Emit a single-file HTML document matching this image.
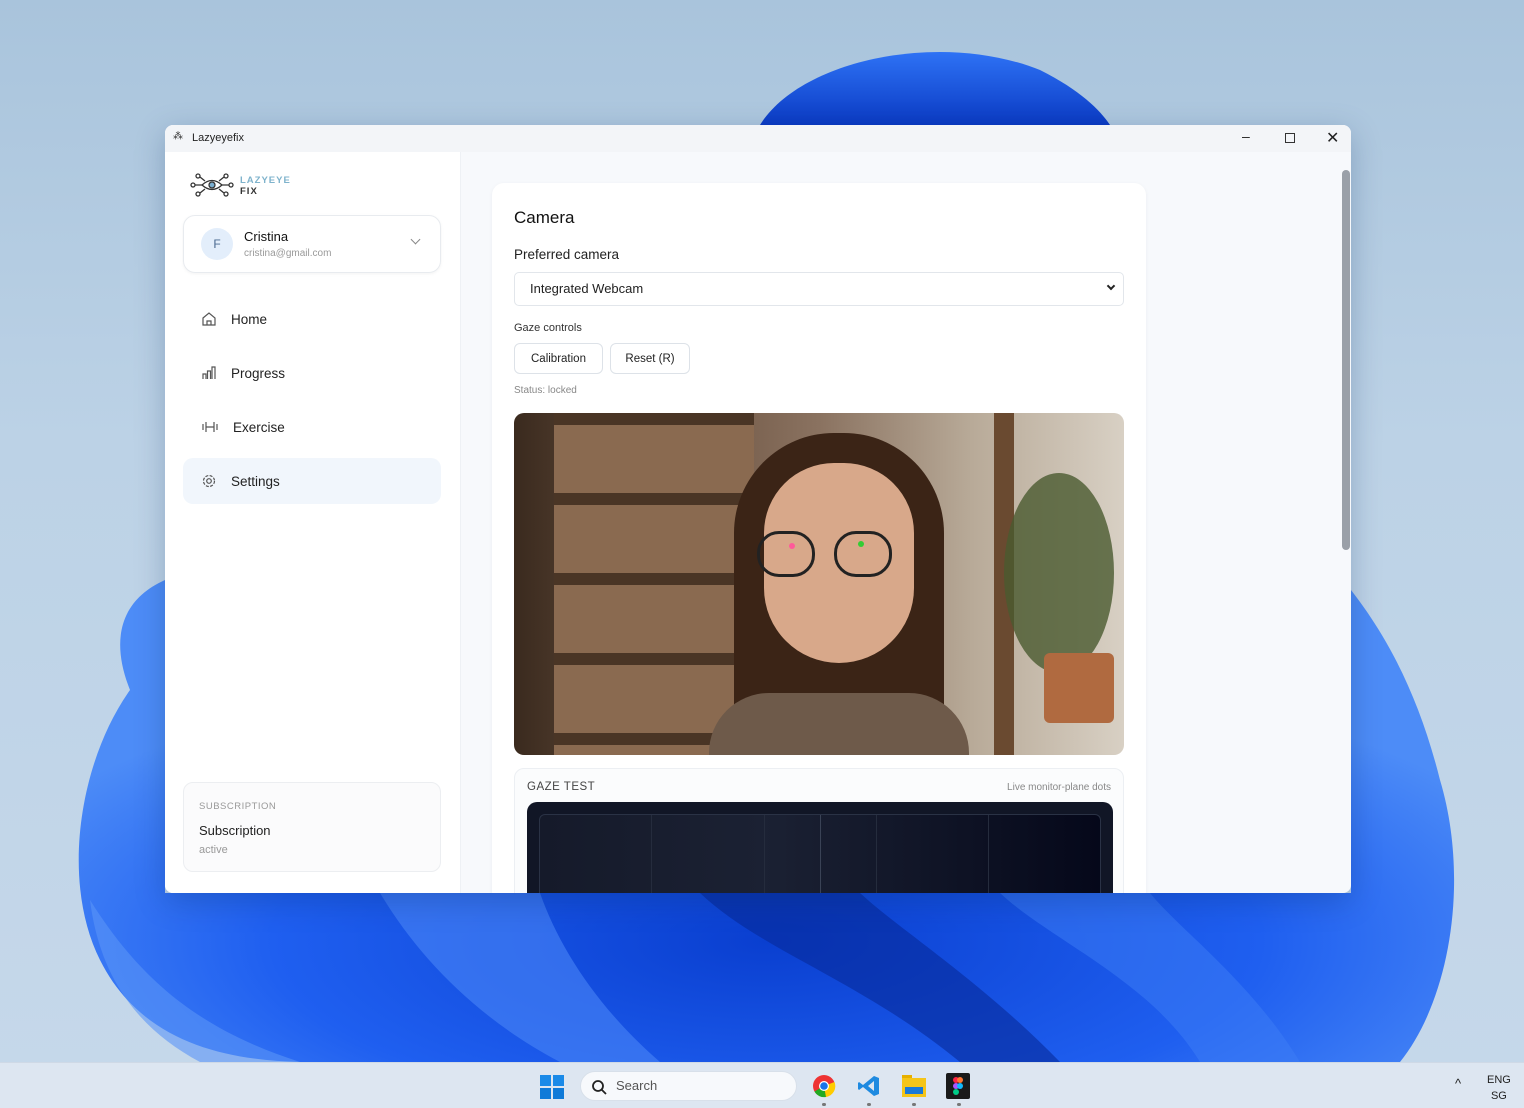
<!DOCTYPE html>
<html><head><meta charset="utf-8"><style>
*{box-sizing:border-box;margin:0;padding:0}
body{width:1524px;height:1108px;overflow:hidden;font-family:"Liberation Sans",sans-serif;background:linear-gradient(180deg,#a9c4dc 0%,#bcd2e6 40%,#c6d8ea 100%);position:relative}
.abs{position:absolute}
.win{left:165px;top:125px;width:1186px;height:768px;background:#f7f9fc;border-radius:8px;overflow:hidden;box-shadow:0 8px 30px rgba(0,40,90,.25)}
.tb{left:0;top:0;width:1186px;height:27px;background:#f3f5f8;font-size:11px;color:#222}
.side{left:0;top:27px;width:296px;height:741px;background:#fff;border-right:1px solid #eef1f5}
.nav{left:18px;width:258px;height:46px;border-radius:10px;font-size:13.5px;color:#222;display:flex;align-items:center;padding-left:18px;gap:14px}
.card{left:327px;top:58px;width:654px;height:720px;background:#fff;border-radius:12px;box-shadow:0 1px 4px rgba(0,0,0,.05)}
.btn{top:218px;height:31px;border:1px solid #dde2e8;border-radius:6px;background:#fff;font-size:11.5px;color:#222;display:flex;align-items:center;justify-content:center}
</style></head><body>
<svg class="abs" style="left:0;top:0" width="1524" height="1108">
<defs>
<radialGradient id="g1" cx="50%" cy="75%" r="60%"><stop offset="0" stop-color="#0a3fd0"/><stop offset=".6" stop-color="#1f5ff0"/><stop offset="1" stop-color="#4d8cf7"/></radialGradient>
<linearGradient id="g2" x1="0" y1="0" x2="0" y2="1"><stop offset="0" stop-color="#2e72f5"/><stop offset="1" stop-color="#0b3bc4"/></linearGradient>
</defs>
<path d="M760 125 C800 60 940 30 1040 70 C1080 90 1100 110 1110 125 Z" fill="url(#g2)"/>
<path d="M165 580 C120 600 110 640 130 690 C80 760 60 880 100 960 C140 1040 220 1060 300 1062 L1400 1062 C1450 1000 1470 880 1440 780 C1420 700 1390 640 1351 590 L1351 893 L165 893 Z" fill="url(#g1)"/>
<path d="M380 893 C420 960 480 1020 560 1062 L660 1062 C600 1010 560 950 540 893Z" fill="#4a86f6" opacity=".6"/>
<path d="M700 893 C760 950 860 980 960 1062 L1060 1062 C980 980 900 930 860 893Z" fill="#062a9a" opacity=".6"/>
<path d="M1000 893 C1050 940 1150 980 1200 1062 L1300 1062 C1250 980 1180 930 1150 893Z" fill="#3d7df5" opacity=".5"/>
<path d="M90 900 C140 980 200 1030 300 1062 L200 1062 C140 1030 100 980 90 900Z" fill="#5a95f7" opacity=".6"/>
</svg>
<div class="abs win">
 <div class="abs tb"><span class="abs" style="left:8px;top:6px;font-size:10px;color:#333">⁂</span><span class="abs" style="left:27px;top:7px">Lazyeyefix</span>
  <span class="abs" style="left:1077px;top:3px;font-size:14px">–</span>
  <span class="abs" style="left:1120px;top:8px;width:10px;height:10px;border:1.2px solid #333"></span>
  <span class="abs" style="left:1161px;top:3px;font-size:16px">✕</span>
 </div>
 <div class="abs side">
  <svg class="abs" style="left:25px;top:20px" width="44" height="26" viewBox="0 0 44 26" fill="none" stroke="#333" stroke-width="1.3"><circle cx="3" cy="13" r="2"/><circle cx="41" cy="13" r="2"/><circle cx="8" cy="4" r="2"/><circle cx="36" cy="4" r="2"/><circle cx="8" cy="22" r="2"/><circle cx="36" cy="22" r="2"/><path d="M12 13 Q22 4 32 13 Q22 22 12 13Z"/><circle cx="22" cy="13" r="3" fill="#7aaed0"/><path d="M5 13h7M32 13h7M10 5l5 4M34 5l-5 4M10 21l5-4M34 21l-5-4"/></svg>
  <div class="abs" style="left:75px;top:23px;font-size:9.5px;font-weight:bold;letter-spacing:1px;color:#7fb3cc;line-height:11px">LAZYEYE<br><span style="color:#333">FIX</span></div>
  <div class="abs" style="left:18px;top:63px;width:258px;height:58px;border:1px solid #e8ebef;border-radius:12px;box-shadow:0 1px 3px rgba(0,0,0,.05)">
   <div class="abs" style="left:17px;top:12px;width:32px;height:32px;border-radius:50%;background:#e3eefb;color:#4a6a90;font-size:12px;text-align:center;line-height:32px">F</div>
   <div class="abs" style="left:60px;top:13px;font-size:13px;color:#111">Cristina</div>
   <div class="abs" style="left:60px;top:32px;font-size:10px;color:#999">cristina@gmail.com</div>
   <span class="abs" style="left:228px;top:20px;width:7px;height:7px;border-right:1.2px solid #888;border-bottom:1.2px solid #888;transform:rotate(45deg)"></span>
  </div>
  <div class="abs nav" style="top:144px"><svg width="16" height="16" viewBox="0 0 16 16" fill="none" stroke="#555" stroke-width="1.2"><path d="M2 7l6-5 6 5v7H2z M6 14v-4h4v4"/></svg>Home</div>
  <div class="abs nav" style="top:198px"><svg width="16" height="16" viewBox="0 0 16 16" fill="none" stroke="#555" stroke-width="1.2"><path d="M2 14V9h3v5M6.5 14V6h3v8M11 14V2h3v12"/></svg>Progress</div>
  <div class="abs nav" style="top:252px"><svg width="18" height="16" viewBox="0 0 18 16" fill="none" stroke="#555" stroke-width="1.2"><path d="M2 5v6M5 3v10M13 3v10M16 5v6M5 8h8"/></svg>Exercise</div>
  <div class="abs nav" style="top:306px;background:#f1f6fc"><svg width="16" height="16" viewBox="0 0 16 16" fill="none" stroke="#555" stroke-width="1.2"><circle cx="8" cy="8" r="2.3"/><circle cx="8" cy="8" r="5.5" stroke-dasharray="3 1.4"/></svg>Settings</div>
  <div class="abs" style="left:18px;top:630px;width:258px;height:90px;border:1px solid #eceef1;border-radius:10px;background:#fbfbfc">
   <div class="abs" style="left:15px;top:18px;font-size:9.5px;color:#999;letter-spacing:.5px">SUBSCRIPTION</div>
   <div class="abs" style="left:15px;top:40px;font-size:13px;color:#222">Subscription</div>
   <div class="abs" style="left:15px;top:61px;font-size:11px;color:#999">active</div>
  </div>
 </div>
 <div class="abs card">
  <div class="abs" style="left:22px;top:25px;font-size:17px;color:#111">Camera</div>
  <div class="abs" style="left:22px;top:64px;font-size:13.5px;color:#222">Preferred camera</div>
  <div class="abs" style="left:22px;top:89px;width:610px;height:34px;border:1px solid #e2e6eb;border-radius:5px;font-size:13px;color:#222;padding:8px 15px">Integrated Webcam<span class="abs" style="right:9px;top:10px;width:6px;height:6px;border-right:2px solid #222;border-bottom:2px solid #222;transform:rotate(45deg)"></span></div>
  <div class="abs" style="left:22px;top:139px;font-size:11px;color:#333">Gaze controls</div>
  <div class="abs btn" style="left:22px;width:89px;top:160px">Calibration</div>
  <div class="abs btn" style="left:118px;width:80px;top:160px">Reset (R)</div>
  <div class="abs" style="left:22px;top:202px;font-size:10px;color:#888">Status: locked</div>
  <div class="abs" style="left:22px;top:230px;width:610px;height:342px;border-radius:10px;overflow:hidden;background:linear-gradient(90deg,#3a2a1e 0%,#6b5240 25%,#8a7260 50%,#b8aa98 75%,#d8d0c4 100%)">
   <div class="abs" style="left:40px;top:0;width:200px;height:342px;background:repeating-linear-gradient(180deg,#4a3525 0 12px,#8a6a50 12px 80px)"></div>
   <div class="abs" style="left:480px;top:0;width:20px;height:342px;background:#6a4a30"></div>
   <div class="abs" style="left:490px;top:60px;width:110px;height:200px;border-radius:50%;background:#4a5a30;opacity:.8"></div>
   <div class="abs" style="left:530px;top:240px;width:70px;height:70px;background:#b06a40;border-radius:6px"></div>
   <div class="abs" style="left:220px;top:20px;width:210px;height:322px;border-radius:100px 100px 20px 20px;background:#3b2416"></div>
   <div class="abs" style="left:250px;top:50px;width:150px;height:200px;border-radius:70px 70px 75px 75px;background:#d8a88a"></div>
   <div class="abs" style="left:195px;top:280px;width:260px;height:70px;border-radius:60px 60px 0 0;background:#6e5a4a"></div>
   <div class="abs" style="left:243px;top:118px;width:58px;height:46px;border:3px solid #222;border-radius:22px"></div>
   <div class="abs" style="left:320px;top:118px;width:58px;height:46px;border:3px solid #222;border-radius:22px"></div>
   <div class="abs" style="left:275px;top:130px;width:6px;height:6px;border-radius:50%;background:#ff5a9a"></div>
   <div class="abs" style="left:344px;top:128px;width:6px;height:6px;border-radius:50%;background:#3c3"></div>
  </div>
  <div class="abs" style="left:22px;top:585px;width:610px;height:140px;border:1px solid #eceff3;border-radius:10px;background:#fbfcfd">
   <div class="abs" style="left:12px;top:12px;font-size:11.5px;color:#444;letter-spacing:.5px">GAZE TEST</div>
   <div class="abs" style="right:12px;top:13px;font-size:10px;color:#888">Live monitor-plane dots</div>
   <div class="abs" style="left:12px;top:33px;width:586px;height:120px;border-radius:10px;background:#111626">
    <div class="abs" style="left:12px;top:12px;width:562px;height:110px;border:1px solid #2a3245;border-radius:6px;background-image:linear-gradient(90deg,transparent 111px,#252c3d 111px,#252c3d 112px,transparent 112px,transparent 224px,#252c3d 224px,#252c3d 225px,transparent 225px,transparent 280px,#3a4255 280px,#3a4255 281px,transparent 281px,transparent 336px,#252c3d 336px,#252c3d 337px,transparent 337px,transparent 448px,#252c3d 448px,#252c3d 449px,transparent 449px),linear-gradient(90deg,#151a2a,#1b2133 40%,#05081a)"></div>
   </div>
  </div>
 </div>
 <div class="abs" style="left:1177px;top:45px;width:8px;height:380px;background:#9aa0a8;border-radius:4px"></div>
</div>
<div class="abs" style="left:0;top:1062px;width:1524px;height:46px;background:#dde6f1;border-top:1px solid #cfd9e6">
 <svg class="abs" style="left:540px;top:12px" width="24" height="24"><rect x="0" y="0" width="11" height="11" fill="#1a8ae8"/><rect x="13" y="0" width="11" height="11" fill="#1a8ae8"/><rect x="0" y="13" width="11" height="11" fill="#0f7ad8"/><rect x="13" y="13" width="11" height="11" fill="#0f7ad8"/></svg>
 <div class="abs" style="left:580px;top:8px;width:217px;height:30px;border-radius:15px;background:#f7f9fc;border:1px solid #d8e0ea;font-size:13px;color:#555;padding:6px 0 0 35px">Search<svg class="abs" style="left:10px;top:7px" width="16" height="16" fill="none" stroke="#222" stroke-width="1.8"><circle cx="7" cy="7" r="5"/><path d="M11 11l4 4"/></svg></div>
 <svg class="abs" style="left:812px;top:11px" width="24" height="24"><circle cx="12" cy="12" r="11" fill="#e33"/><path d="M12 12L2.5 17.5A11 11 0 0 0 14 23Z" fill="#2a2"/><path d="M12 12L14 23A11 11 0 0 0 22.5 8Z" fill="#fc0"/><circle cx="12" cy="12" r="5" fill="#fff"/><circle cx="12" cy="12" r="3.8" fill="#1a73e8"/></svg>
 <svg class="abs" style="left:857px;top:11px" width="24" height="24"><path d="M17 2L22 4V20L17 22L6 13L2 16L1 15V9L2 8L6 11Z M17 7L11 12L17 17Z" fill="#1e8ae0"/></svg>
 <svg class="abs" style="left:902px;top:12px" width="24" height="22"><rect x="0" y="0" width="10" height="6" fill="#e7b000"/><rect x="0" y="3" width="24" height="19" fill="#f5c518"/><rect x="3" y="12" width="18" height="7" fill="#1a7ad8"/></svg>
 <svg class="abs" style="left:946px;top:10px" width="24" height="26"><rect width="24" height="26" rx="2" fill="#1a1a1a"/><circle cx="10" cy="7" r="3" fill="#f24"/><circle cx="14" cy="7" r="3" fill="#f73"/><circle cx="10" cy="13" r="3" fill="#a5f"/><circle cx="14" cy="13" r="3" fill="#1bf"/><circle cx="10" cy="19" r="3" fill="#0c8"/></svg>
 <div class="abs" style="left:822px;top:40px;width:4px;height:3px;background:#777;border-radius:2px;box-shadow:45px 0 #777,90px 0 #777,135px 0 #777"></div>
 <div class="abs" style="left:1455px;top:13px;font-size:13px;color:#222">^</div>
 <div class="abs" style="left:1487px;top:9px;font-size:11px;color:#222;text-align:center;line-height:16px">ENG<br>SG</div>
</div>
</body></html>
